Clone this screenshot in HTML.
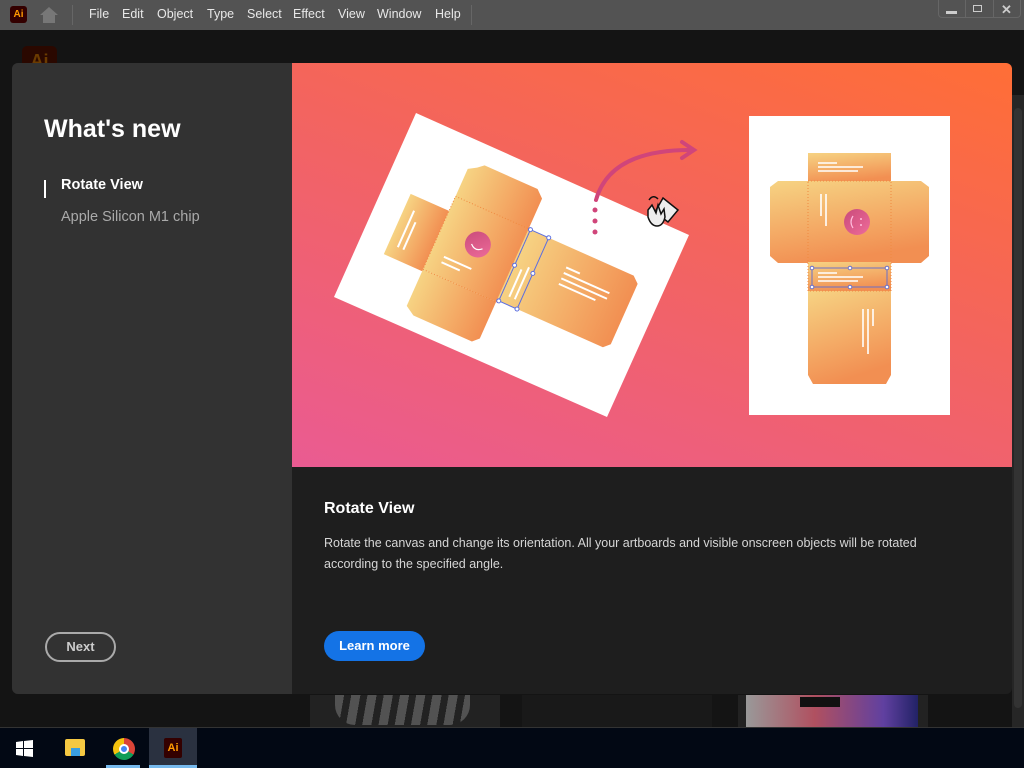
<!DOCTYPE html>
<html><head><meta charset="utf-8"><style>
*{margin:0;padding:0;box-sizing:border-box}
body{width:1024px;height:768px;overflow:hidden;background:#141414;font-family:"Liberation Sans",sans-serif;position:relative}
.abs{position:absolute}
.menu span{position:absolute;top:7px;font-size:12.5px;color:#e8e8e8}
</style></head><body>
<div class="abs" style="left:0;top:0;width:1024px;height:30px;background:#535353"></div>
<div class="abs" style="left:10px;top:6px;width:17px;height:17px;background:#330000;border-radius:3px;color:#ff9a00;font-size:10px;font-weight:bold;text-align:center;line-height:17px">Ai</div>
<svg class="abs" style="left:39px;top:6px" width="20" height="18"><path d="M1 9 L10 1 L19 9 L16 9 L16 17 L4 17 L4 9Z" fill="#777"/></svg>
<div class="abs" style="left:72px;top:5px;width:1px;height:20px;background:#666"></div>
<div class="abs" style="left:471px;top:5px;width:1px;height:20px;background:#666"></div>
<div class="menu">
<span style="left:89px">File</span><span style="left:122px">Edit</span><span style="left:157px">Object</span><span style="left:207px">Type</span><span style="left:247px">Select</span><span style="left:293px">Effect</span><span style="left:338px">View</span><span style="left:377px">Window</span><span style="left:435px">Help</span></div>
<div class="abs" style="left:938px;top:0;width:83px;height:18px;border:1px solid #666;border-top:none;border-radius:0 0 4px 4px"></div>
<div class="abs" style="left:965px;top:0;width:1px;height:18px;background:#666"></div>
<div class="abs" style="left:993px;top:0;width:1px;height:18px;background:#666"></div>
<div class="abs" style="left:946px;top:11px;width:11px;height:3px;background:#ccc"></div>
<div class="abs" style="left:973px;top:5px;width:9px;height:7px;border:1.5px solid #ccc"></div>
<div class="abs" style="left:1001px;top:2px;color:#ccc;font-size:13px;font-weight:bold">✕</div>
<div class="abs" style="left:22px;top:46px;width:35px;height:30px;background:#2a0800;border-radius:5px;color:#6b3b00;font-weight:bold;font-size:18px;text-align:center;line-height:30px">Ai</div>
<div class="abs" style="left:1012px;top:95px;width:12px;height:633px;background:#262626"></div>
<div class="abs" style="left:1014px;top:108px;width:8px;height:600px;background:#333;border-radius:4px"></div>
<!-- bottom thumbnails -->
<div class="abs" style="left:310px;top:695px;width:190px;height:33px;background:#222"></div>
<div class="abs" style="left:335px;top:695px;width:135px;height:30px;background:repeating-linear-gradient(100deg,#666 0 9px,#222 9px 16px);opacity:.7;border-radius:0 0 20px 20px"></div>
<div class="abs" style="left:522px;top:695px;width:190px;height:33px;background:#191919"></div>
<div class="abs" style="left:738px;top:695px;width:190px;height:33px;background:#222"></div>
<div class="abs" style="left:746px;top:695px;width:172px;height:33px;background:linear-gradient(90deg,#999,#b05060 40%,#6040a0 80%,#226)"></div>
<div class="abs" style="left:800px;top:697px;width:40px;height:10px;background:#111"></div>
<div class="abs" style="left:0;top:727px;width:1024px;height:1px;background:#333"></div>
<!-- dialog -->
<div class="abs" style="left:12px;top:63px;width:1000px;height:631px;background:#1e1e1e;border-radius:6px;overflow:hidden">
 <div class="abs" style="left:0;top:0;width:280px;height:631px;background:#323232"></div>
 <div class="abs" style="left:32px;top:52px;font-size:25px;font-weight:bold;color:#fff">What's new</div>
 <div class="abs" style="left:32px;top:117px;width:2px;height:18px;background:#fff"></div>
 <div class="abs" style="left:49px;top:114px;font-size:14.5px;font-weight:bold;color:#fff">Rotate View</div>
 <div class="abs" style="left:49px;top:146px;font-size:14.5px;color:#aaa">Apple Silicon M1 chip</div>
 <div class="abs" style="left:33px;top:569px;width:71px;height:30px;border:2px solid #aaa;border-radius:15px;color:#ccc;font-size:13px;font-weight:bold;text-align:center;line-height:26px">Next</div>
 <div class="abs" style="left:280px;top:0;width:720px;height:404px;background:linear-gradient(200deg,#ff6e36 0%,#f3645f 45%,#ea5b92 100%)"></div>
 <div class="abs" style="left:312px;top:437px;font-size:16px;font-weight:bold;color:#fff">Rotate View</div>
 <div class="abs" style="left:312px;top:470px;width:640px;font-size:12.5px;line-height:21px;color:#d6d6d6">Rotate the canvas and change its orientation. All your artboards and visible onscreen objects will be rotated according to the specified angle.</div>
 <div class="abs" style="left:312px;top:568px;width:101px;height:30px;background:#1473e6;border-radius:15px;color:#fff;font-size:13px;font-weight:bold;text-align:center;line-height:30px">Learn more</div>
</div>
<svg class="abs" style="left:0;top:0" width="1024" height="728">
<defs>
<linearGradient id="bx" x1="0" y1="0" x2="1" y2="0"><stop offset="0" stop-color="#f6d383"/><stop offset="1" stop-color="#f28f52"/></linearGradient>
<linearGradient id="bx2" x1="0" y1="0" x2=".3" y2="1"><stop offset="0" stop-color="#f6d383"/><stop offset="1" stop-color="#f28f52"/></linearGradient>
<linearGradient id="sm" x1="0" y1="0" x2="1" y2="1"><stop offset="0" stop-color="#c94a7a"/><stop offset="1" stop-color="#ee6c9a"/></linearGradient>
</defs>
<polygon points="334,297 416,113 689,235 607,417" fill="#fff"/>
<g transform="translate(416,113) rotate(24)">
 <g fill="url(#bx)">
  <polygon points="28,76 70,76 70,142 28,142"/>
  <polygon points="78,25 84,20 142,20 150,27 150,62 70,62 70,30"/>
  <polygon points="70,60 152,60 152,140 70,140"/>
  <polygon points="70,140 150,140 150,180 144,186 80,186 70,180"/>
  <polygon points="150,60 265,60 272,66 272,132 266,138 150,138"/>
 </g>
 <rect x="70" y="60" width="82" height="80" fill="none" stroke="#f08a40" stroke-dasharray="1 2" stroke-width="1"/>
 <circle cx="110" cy="95" r="13" fill="url(#sm)"/>
 <path d="M104 97 q6 6 12 0" stroke="#fff" stroke-width="1.2" fill="none"/>
 <g stroke="#fff" stroke-width="2"><line x1="38" y1="90" x2="38" y2="130"/><line x1="44" y1="100" x2="44" y2="130"/><line x1="84" y1="120" x2="114" y2="120"/><line x1="84" y1="126" x2="104" y2="126"/>
 <line x1="200" y1="80" x2="215" y2="80"/><line x1="200" y1="86" x2="250" y2="86"/><line x1="200" y1="92" x2="250" y2="92"/><line x1="200" y1="98" x2="240" y2="98"/>
 <line x1="160" y1="100" x2="160" y2="130"/><line x1="166" y1="95" x2="166" y2="130"/></g>
 <rect x="152" y="60" width="20" height="78" fill="none" stroke="#5c6fe0" stroke-width="1"/>
 <g fill="#fff" stroke="#5c6fe0"><circle cx="152" cy="60" r="2"/><circle cx="172" cy="60" r="2"/><circle cx="152" cy="138" r="2"/><circle cx="172" cy="138" r="2"/><circle cx="152" cy="99" r="2"/><circle cx="172" cy="99" r="2"/></g>
</g>
<path d="M596 200 Q610 150 690 150" stroke="#d0457a" stroke-width="4" fill="none" stroke-linecap="round"/>
<path d="M682 142 L694 150 L682 158" stroke="#d0457a" stroke-width="4" fill="none" stroke-linecap="round"/>
<g fill="#d0457a"><circle cx="595" cy="210" r="2.5"/><circle cx="595" cy="221" r="2.5"/><circle cx="595" cy="232" r="2.5"/></g>
<polygon points="663,198 678,210 668,222 655,212" fill="#eee" stroke="#111" stroke-width="1.5"/>
<path d="M648 210 l4 -5 l4 8 l2 -8 l3 9 l3 -5 l1 8 q-2 9 -8 9 q-6 0 -9 -9z" fill="#eee" stroke="#111" stroke-width="1.5"/>
<path d="M649 200 q4 -6 9 -1" stroke="#111" stroke-width="1.5" fill="none"/>
<!-- right artboard -->
<rect x="749" y="116" width="201" height="299" fill="#fff"/>
<g fill="url(#bx2)">
 <rect x="808" y="153" width="83" height="30"/>
 <polygon points="778,181 921,181 929,187 929,256 921,263 778,263 770,256 770,187"/>
 <rect x="808" y="262" width="83" height="30"/>
 <polygon points="808,291 891,291 891,375 886,384 813,384 808,375"/>
</g>
<rect x="808" y="181" width="83" height="110" fill="none" stroke="#f08a40" stroke-dasharray="1 2"/>
<circle cx="857" cy="222" r="13" fill="url(#sm)"/>
<path d="M853 216 q-4 6 0 12" stroke="#fbd" stroke-width="1.2" fill="none"/>
<g fill="#fbd"><circle cx="861" cy="219" r="1"/><circle cx="861" cy="225" r="1"/></g>
<g stroke="#fff" stroke-width="1.6"><line x1="818" y1="163" x2="837" y2="163"/><line x1="818" y1="167" x2="863" y2="167"/><line x1="818" y1="171" x2="858" y2="171"/>
<line x1="821" y1="194" x2="821" y2="216"/><line x1="826" y1="194" x2="826" y2="226"/>
<line x1="818" y1="273" x2="837" y2="273"/><line x1="818" y1="277" x2="863" y2="277"/><line x1="818" y1="281" x2="858" y2="281"/>
<line x1="863" y1="309" x2="863" y2="347"/><line x1="868" y1="309" x2="868" y2="354"/><line x1="873" y1="309" x2="873" y2="326"/></g>
<rect x="812" y="268" width="75" height="19" fill="none" stroke="#6a70c8"/>
<g fill="#fff" stroke="#6a70c8"><circle cx="812" cy="268" r="1.8"/><circle cx="850" cy="268" r="1.8"/><circle cx="887" cy="268" r="1.8"/><circle cx="812" cy="287" r="1.8"/><circle cx="850" cy="287" r="1.8"/><circle cx="887" cy="287" r="1.8"/></g>
</svg>
<!-- taskbar -->
<div class="abs" style="left:0;top:728px;width:1024px;height:40px;background:#020814"></div>
<svg class="abs" style="left:16px;top:740px" width="18" height="17"><path d="M0 2 L7 1 V8 H0Z M8 1 L17 0 V8 H8Z M0 9 H7 V16 L0 15Z M8 9 H17 V17 L8 16Z" fill="#fff"/></svg>
<div class="abs" style="left:65px;top:739px;width:20px;height:17px;background:#f5c842;border-radius:2px"></div>
<div class="abs" style="left:71px;top:748px;width:9px;height:8px;background:#3a9ee0"></div>
<div class="abs" style="left:113px;top:738px;width:22px;height:22px;border-radius:50%;background:conic-gradient(#db4437 0 120deg,#0f9d58 120deg 240deg,#f4c20d 240deg)"></div>
<div class="abs" style="left:119px;top:744px;width:10px;height:10px;border-radius:50%;background:#4285f4;border:2px solid #fff"></div>
<div class="abs" style="left:106px;top:765px;width:34px;height:3px;background:#76b9ed"></div>
<div class="abs" style="left:149px;top:728px;width:48px;height:40px;background:#2a3140"></div>
<div class="abs" style="left:149px;top:765px;width:48px;height:3px;background:#76b9ed"></div>
<div class="abs" style="left:164px;top:738px;width:18px;height:20px;background:#330000;border-radius:2px;color:#ff9a00;font-size:11px;font-weight:bold;text-align:center;line-height:20px">Ai</div>
</body></html>
